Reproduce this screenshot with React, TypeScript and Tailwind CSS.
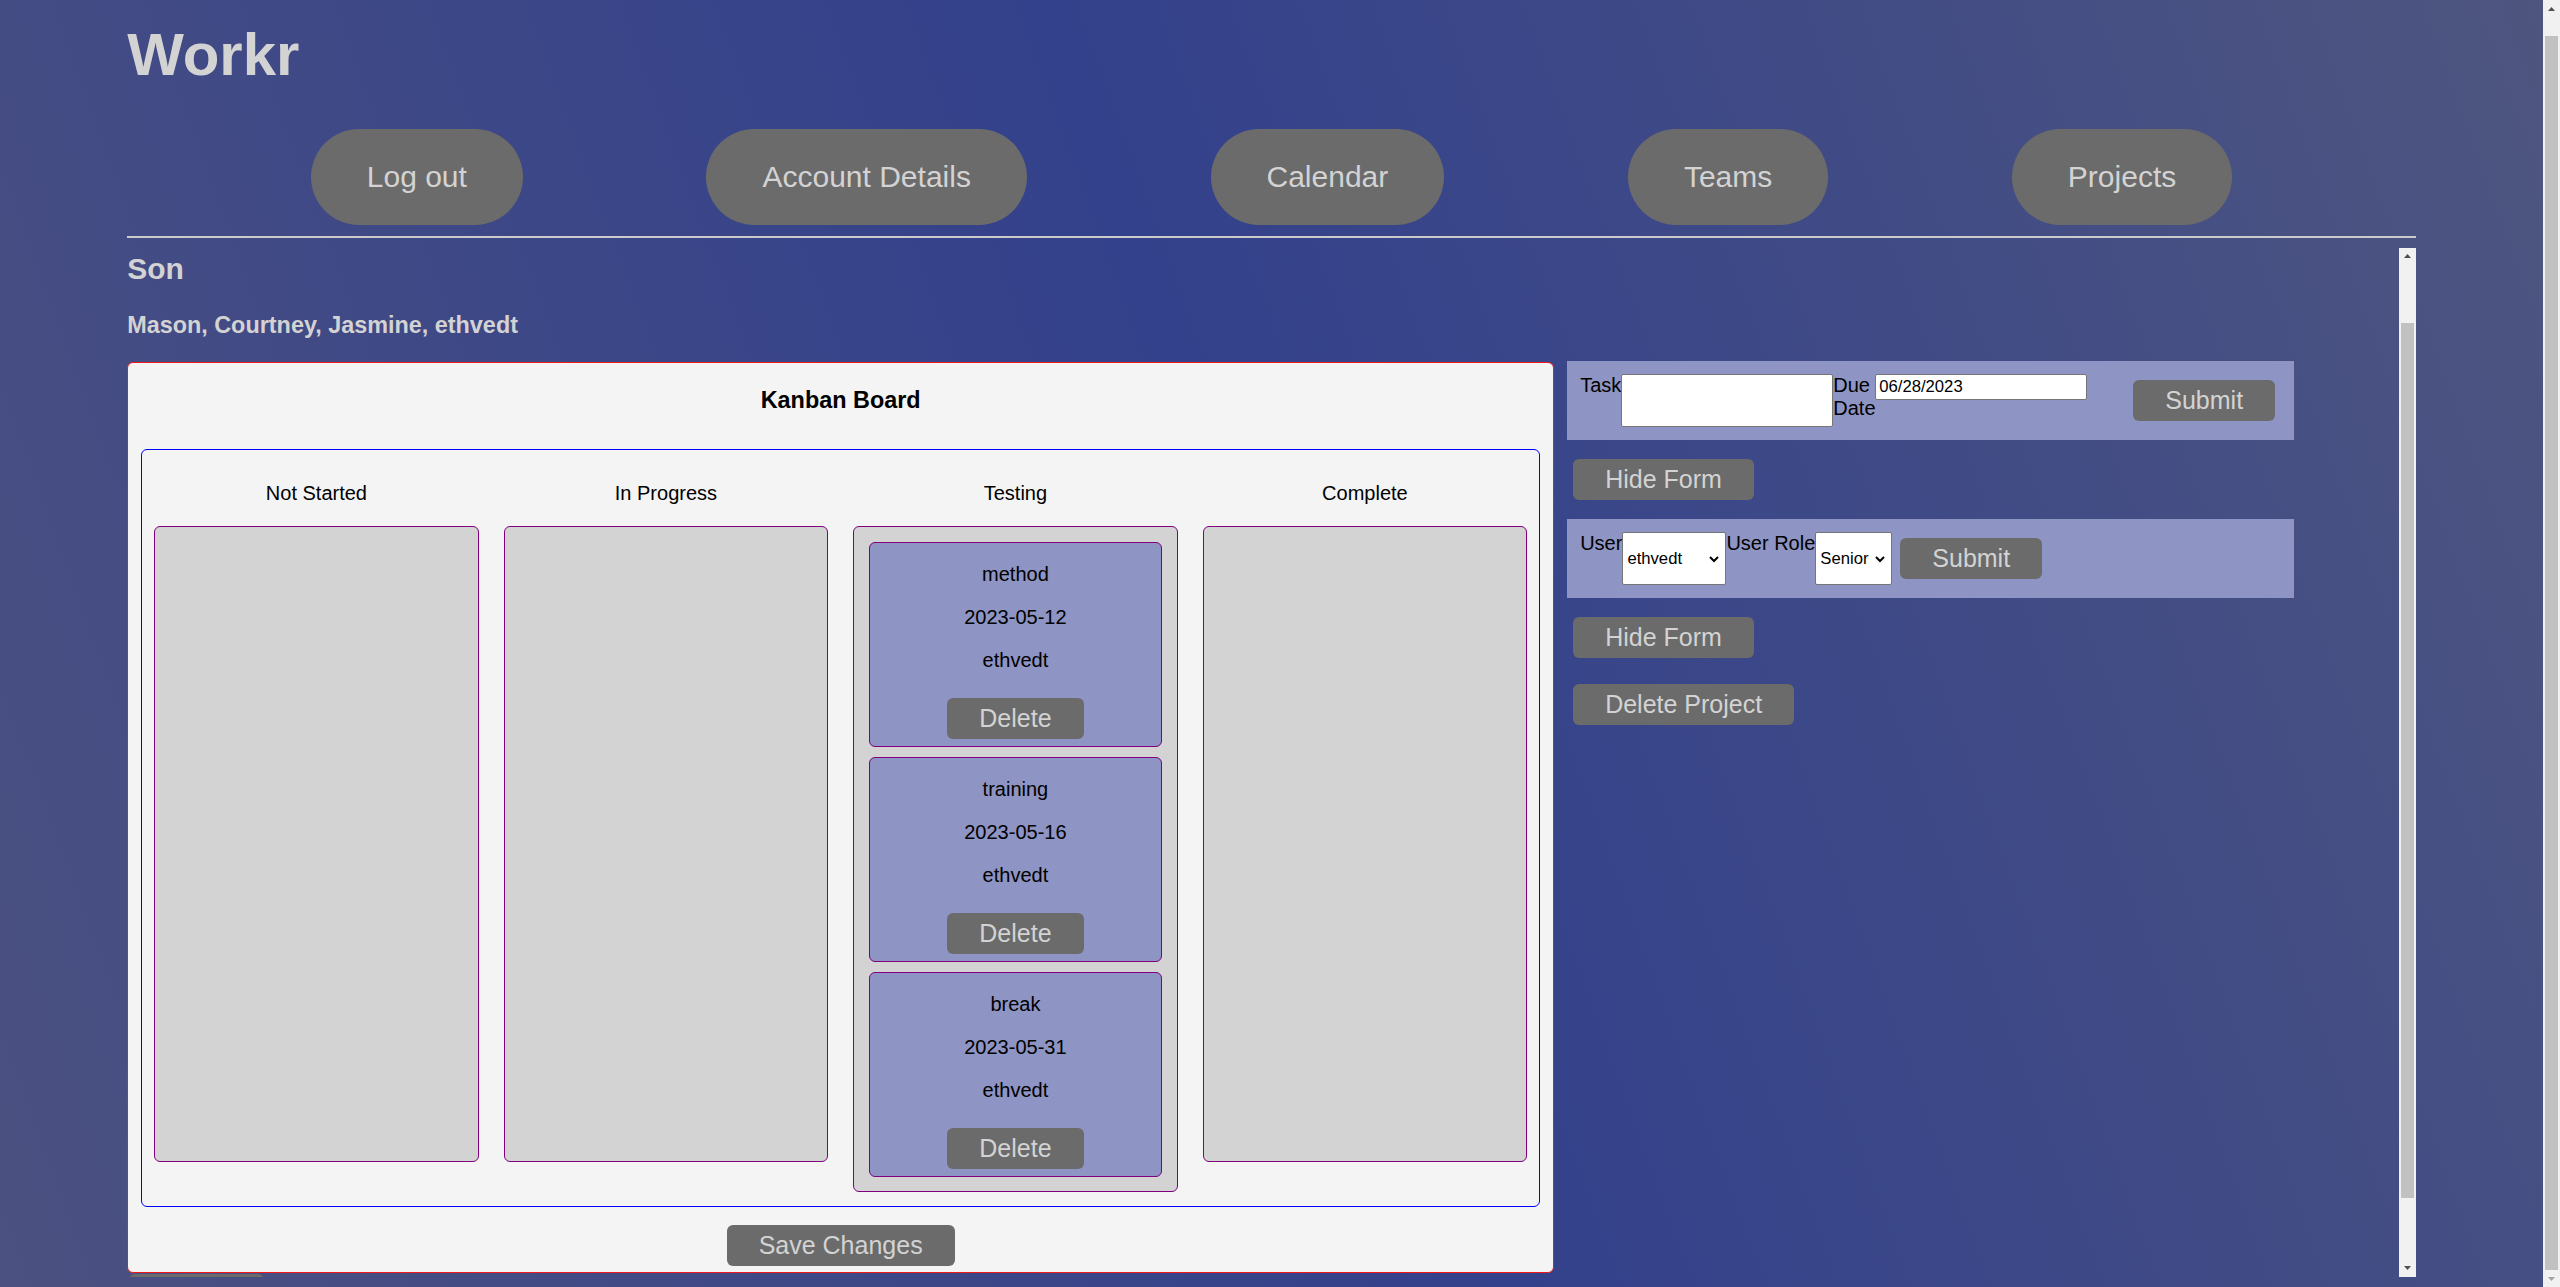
import React from 'react';

type Task = { name: string; due: string; user: string };

const NAV_LINKS = ['Log out', 'Account Details', 'Calendar', 'Teams', 'Projects'];

const COLUMNS: { title: string; tasks: Task[] }[] = [
  { title: 'Not Started', tasks: [] },
  { title: 'In Progress', tasks: [] },
  {
    title: 'Testing',
    tasks: [
      { name: 'method', due: '2023-05-12', user: 'ethvedt' },
      { name: 'training', due: '2023-05-16', user: 'ethvedt' },
      { name: 'break', due: '2023-05-31', user: 'ethvedt' },
    ],
  },
  { title: 'Complete', tasks: [] },
];

const grayBtn = 'bg-[#6b6b6b] text-[#d3d3d3] text-[25px] px-[32px] py-[6px] rounded-[6px] whitespace-nowrap';

// classic scrollbar look (arrows + thumb)
const ScrollArrow: React.FC<{ up?: boolean; dim?: boolean }> = ({ up, dim }) => (
  <div className="h-[17px] shrink-0 flex items-center justify-center">
    <svg width="7" height="4" viewBox="0 0 7 4">
      <polygon points={up ? '3.5,0 7,4 0,4' : '0,0 7,0 3.5,4'} fill={dim ? '#a3a3a3' : '#505050'} />
    </svg>
  </div>
);

const Scrollbar: React.FC<{ thumbClass: string; downDim?: boolean }> = ({ thumbClass, downDim }) => (
  <div className="w-[17px] shrink-0 bg-[#f1f1f1] flex flex-col">
    <ScrollArrow up />
    <div className="flex-1 px-[2px]">
      <div className={`bg-[#c1c1c1] ${thumbClass}`} />
    </div>
    <ScrollArrow dim={downDim} />
  </div>
);

const Select: React.FC<{ value: string; width: string }> = ({ value, width }) => (
  <div className={`relative ${width} h-[53px]`}>
    <select className="appearance-none w-full h-full bg-white border border-[#767676] rounded-[2px] pl-[4px] text-[16.67px] text-black">
      <option>{value}</option>
    </select>
    <svg className="absolute right-[7px] top-[24px] pointer-events-none" width="10" height="7" viewBox="0 0 10 7">
      <polyline points="1,1 5,5 9,1" fill="none" stroke="#000" strokeWidth="2" />
    </svg>
  </div>
);

const TaskCard: React.FC<{ task: Task }> = ({ task }) => (
  <div className="flex flex-col items-center bg-[#8e94c3] border border-[#800080] rounded-[6px] pt-[20px] pb-[7px]">
    <p className="leading-[23px]">{task.name}</p>
    <p className="leading-[23px] mt-[20px]">{task.due}</p>
    <p className="leading-[23px] mt-[20px]">{task.user}</p>
    <button className={`${grayBtn} mt-[26px]`}>Delete</button>
  </div>
);

const KanbanBoard: React.FC = () => (
  <div className="w-[1427px] shrink-0 bg-[#f4f4f4] border border-[#f01818] rounded-[6px] text-black pb-[6px]">
    <h3 className="mt-[24px] text-center text-[23.4px] font-bold leading-[27px]">Kanban Board</h3>

    {/* columns */}
    <div className="mx-[13px] mt-[35px] border border-[#0000ff] rounded-[6px] flex items-start gap-[25px] px-[12px] pt-[32px] pb-[14px]">
      {COLUMNS.map(col => (
        <div key={col.title} className="flex-1">
          <p className="text-center leading-[23px]">{col.title}</p>
          <div className="mt-[21px] min-h-[636px] bg-[#d3d3d3] border border-[#800080] rounded-[6px] px-[15px] pt-[15px] pb-[14px] flex flex-col gap-[10px]">
            {col.tasks.map(t => (
              <TaskCard key={t.name} task={t} />
            ))}
          </div>
        </div>
      ))}
    </div>

    <div className="flex justify-center mt-[18px]">
      <button className={grayBtn}>Save Changes</button>
    </div>
  </div>
);

const SidePanel: React.FC = () => (
  <div className="ml-[13px] w-[727px] -mt-px flex flex-col items-start">
    {/* add task */}
    <form className="w-full bg-[#8e94c3] p-[13px] flex items-start text-black">
      <label className="flex items-start">
        <span className="leading-[23px]">Task</span>
        <textarea className="w-[212px] h-[53px] bg-white border border-[#767676] rounded-[2px] resize-none" />
      </label>
      <label className="flex items-start">
        <span className="w-[42px] leading-[23px]">Due Date</span>
        <input
          type="text"
          readOnly
          value="06/28/2023"
          className="w-[212px] h-[26px] bg-white border border-[#767676] rounded-[2px] pl-[3px] text-[16.67px]"
        />
      </label>
      <button type="button" className={`${grayBtn} self-center ml-[46px]`}>Submit</button>
    </form>
    <button className={`${grayBtn} ml-[6px] mt-[19px]`}>Hide Form</button>

    {/* add member */}
    <form className="w-full mt-[19px] bg-[#8e94c3] p-[13px] flex items-start text-black">
      <label className="flex items-start">
        <span className="leading-[23px]">User</span>
        <Select value="ethvedt" width="w-[104px]" />
      </label>
      <label className="flex items-start">
        <span className="leading-[23px]">User Role</span>
        <Select value="Senior" width="w-[77px]" />
      </label>
      <button type="button" className={`${grayBtn} self-center ml-[8px]`}>Submit</button>
    </form>
    <button className={`${grayBtn} ml-[6px] mt-[19px]`}>Hide Form</button>
    <button className={`${grayBtn} ml-[6px] mt-[26px]`}>Delete Project</button>
  </div>
);

const App: React.FC = () => {
  return (
    <div className="h-screen flex overflow-hidden bg-[linear-gradient(70deg,#4b5180_0%,#33418c_50%,#4e567f_100%)] font-['Liberation_Sans',Arial,sans-serif] text-[20px] leading-[normal]">
      <div className="flex-1 overflow-hidden">
        <div className="w-[90%] mx-auto pt-[20px]">
          <h1 className="text-[60px] font-bold text-[#d3d3d3]">Workr</h1>

          <nav className="mt-[40px] flex justify-evenly">
            {NAV_LINKS.map(link => (
              <button
                key={link}
                className="bg-[#6b6b6b] text-[#d3d3d3] text-[30px] px-[56px] py-[31px] rounded-full whitespace-nowrap"
              >
                {link}
              </button>
            ))}
          </nav>

          <div className="mt-[10.5px] h-[2px] bg-[#cbcbcb]" />

          {/* project view */}
          <div className="mt-[10px] h-[1029px] flex">
            <div className="flex-1 overflow-hidden pt-[4px]">
              <h2 className="text-[30px] font-bold text-[#d3d3d3]">Son</h2>
              <h3 className="mt-[26.5px] text-[23.4px] font-bold text-[#d3d3d3]">Mason, Courtney, Jasmine, ethvedt</h3>

              <div className="mt-[23px] flex items-start">
                <KanbanBoard />
                <SidePanel />
              </div>

              <div className="w-[135px] h-[41px] ml-[2px] mt-px bg-[#6b6b6b] rounded-[6px]" />
            </div>
            <Scrollbar thumbClass="mt-[58px] h-[875px]" />
          </div>
        </div>
      </div>
      <Scrollbar thumbClass="mt-[19px] h-[1234px]" downDim />
    </div>
  );
};

export default App;
